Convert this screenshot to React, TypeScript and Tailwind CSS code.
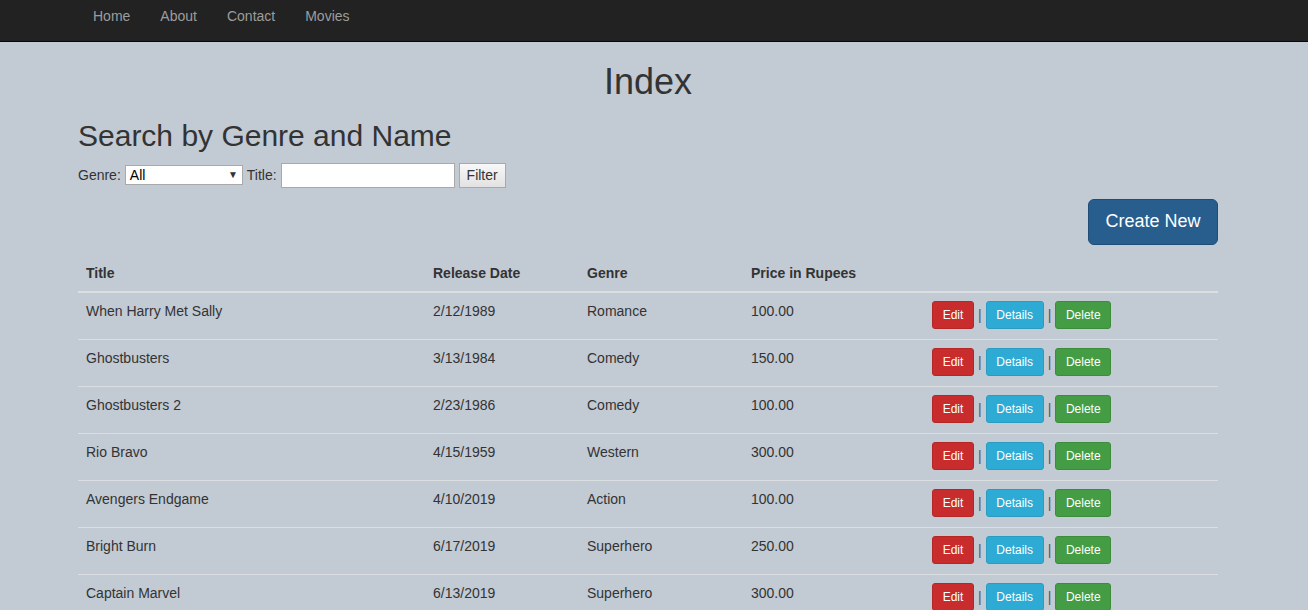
import React from 'react';

const NAV = ['Home', 'About', 'Contact', 'Movies'];

const MOVIES = [
  { title: 'When Harry Met Sally', date: '2/12/1989', genre: 'Romance', price: '100.00' },
  { title: 'Ghostbusters', date: '3/13/1984', genre: 'Comedy', price: '150.00' },
  { title: 'Ghostbusters 2', date: '2/23/1986', genre: 'Comedy', price: '100.00' },
  { title: 'Rio Bravo', date: '4/15/1959', genre: 'Western', price: '300.00' },
  { title: 'Avengers Endgame', date: '4/10/2019', genre: 'Action', price: '100.00' },
  { title: 'Bright Burn', date: '6/17/2019', genre: 'Superhero', price: '250.00' },
  { title: 'Captain Marvel', date: '6/13/2019', genre: 'Superhero', price: '300.00' },
];

function Navbar() {
  return (
    <nav className="h-[42px] bg-[#222222] border-b border-[#080808]">
      <ul className="flex ml-[78px]">
        {NAV.map((item) => (
          <li key={item}>
            <a className="block px-[15px] pt-[6px] leading-[20px] text-[14px] text-[#9d9d9d]">{item}</a>
          </li>
        ))}
      </ul>
    </nav>
  );
}

function SearchForm() {
  return (
    <div className="flex items-center h-[25px] text-[14px] text-[#333333]">
      <span>Genre:</span>
      <div className="relative ml-[4px] w-[118px] h-[20px] bg-white border border-[#a9a9a9]">
        <span className="absolute left-[4px] top-0 leading-[18px] text-[14px] text-black">All</span>
        <span className="absolute right-[4px] top-0 leading-[18px] text-[10px] text-[#333]">▼</span>
      </div>
      <span className="ml-[4px]">Title:</span>
      <input className="ml-[4px] w-[174px] h-[25px] bg-white border border-[#a9a9a9] outline-none" />
      <button
        type="button"
        className="ml-[4px] w-[47px] h-[25px] border border-[#a9a9a9] bg-gradient-to-b from-[#f8f8f8] to-[#e2e2e2] text-[14px] text-[#333]"
      >
        Filter
      </button>
    </div>
  );
}

function ActionButtons() {
  return (
    <div className="flex items-center h-[30px] pb-[2px] text-[12px] text-white [text-shadow:0_-1px_0_rgba(0,0,0,0.2)]">
      <button type="button" className="h-[28px] w-[42px] rounded-[3px] bg-[#c82c2c] border border-[#b52727]">
        Edit
      </button>
      <span className="mx-[4px] text-[14px] text-[#555] [text-shadow:none]">|</span>
      <button type="button" className="h-[28px] w-[58px] rounded-[3px] bg-[#2eabd4] border border-[#2a9cc2]">
        Details
      </button>
      <span className="mx-[4px] text-[14px] text-[#555] [text-shadow:none]">|</span>
      <button type="button" className="h-[28px] w-[56px] rounded-[3px] bg-[#449d44] border border-[#3c8c3c]">
        Delete
      </button>
    </div>
  );
}

function MovieTable() {
  return (
    <table className="mt-[10px] w-[1140px] border-collapse text-[14px] text-[#333333] leading-[20px]">
      <thead>
        <tr>
          <th className="w-[347px] p-[8px] text-left font-bold border-b-2 border-[#dcdfe2]">Title</th>
          <th className="w-[154px] p-[8px] text-left font-bold border-b-2 border-[#dcdfe2]">Release Date</th>
          <th className="w-[164px] p-[8px] text-left font-bold border-b-2 border-[#dcdfe2]">Genre</th>
          <th className="w-[181px] p-[8px] text-left font-bold border-b-2 border-[#dcdfe2]">Price in Rupees</th>
          <th className="p-[8px] text-left border-b-2 border-[#dcdfe2]"></th>
        </tr>
      </thead>
      <tbody>
        {MOVIES.map((m) => (
          <tr key={m.title} className="border-t border-[#dcdfe2] align-top">
            <td className="p-[8px]">{m.title}</td>
            <td className="p-[8px]">{m.date}</td>
            <td className="p-[8px]">{m.genre}</td>
            <td className="p-[8px]">{m.price}</td>
            <td className="p-[8px]">
              <ActionButtons />
            </td>
          </tr>
        ))}
      </tbody>
    </table>
  );
}

export default function App() {
  return (
    <div className="min-h-[610px] bg-[#c2cad4] font-['Liberation_Sans',Arial,sans-serif]">
      <Navbar />
      <div className="ml-[78px] w-[1140px]">
        <h2 className="mt-[20px] text-center text-[36px] leading-[1.1] text-[#333333]">Index</h2>
        <h3 className="mt-[17px] mb-[11px] text-[30px] leading-[1.1] text-[#333333]">Search by Genre and Name</h3>
        <SearchForm />
        <div className="flex justify-end mt-[11px]">
          <button
            type="button"
            className="h-[46px] w-[130px] rounded-[6px] bg-[#285e8e] border border-[#1f4d76] text-[18px] text-white"
          >
            Create New
          </button>
        </div>
        <MovieTable />
      </div>
    </div>
  );
}
